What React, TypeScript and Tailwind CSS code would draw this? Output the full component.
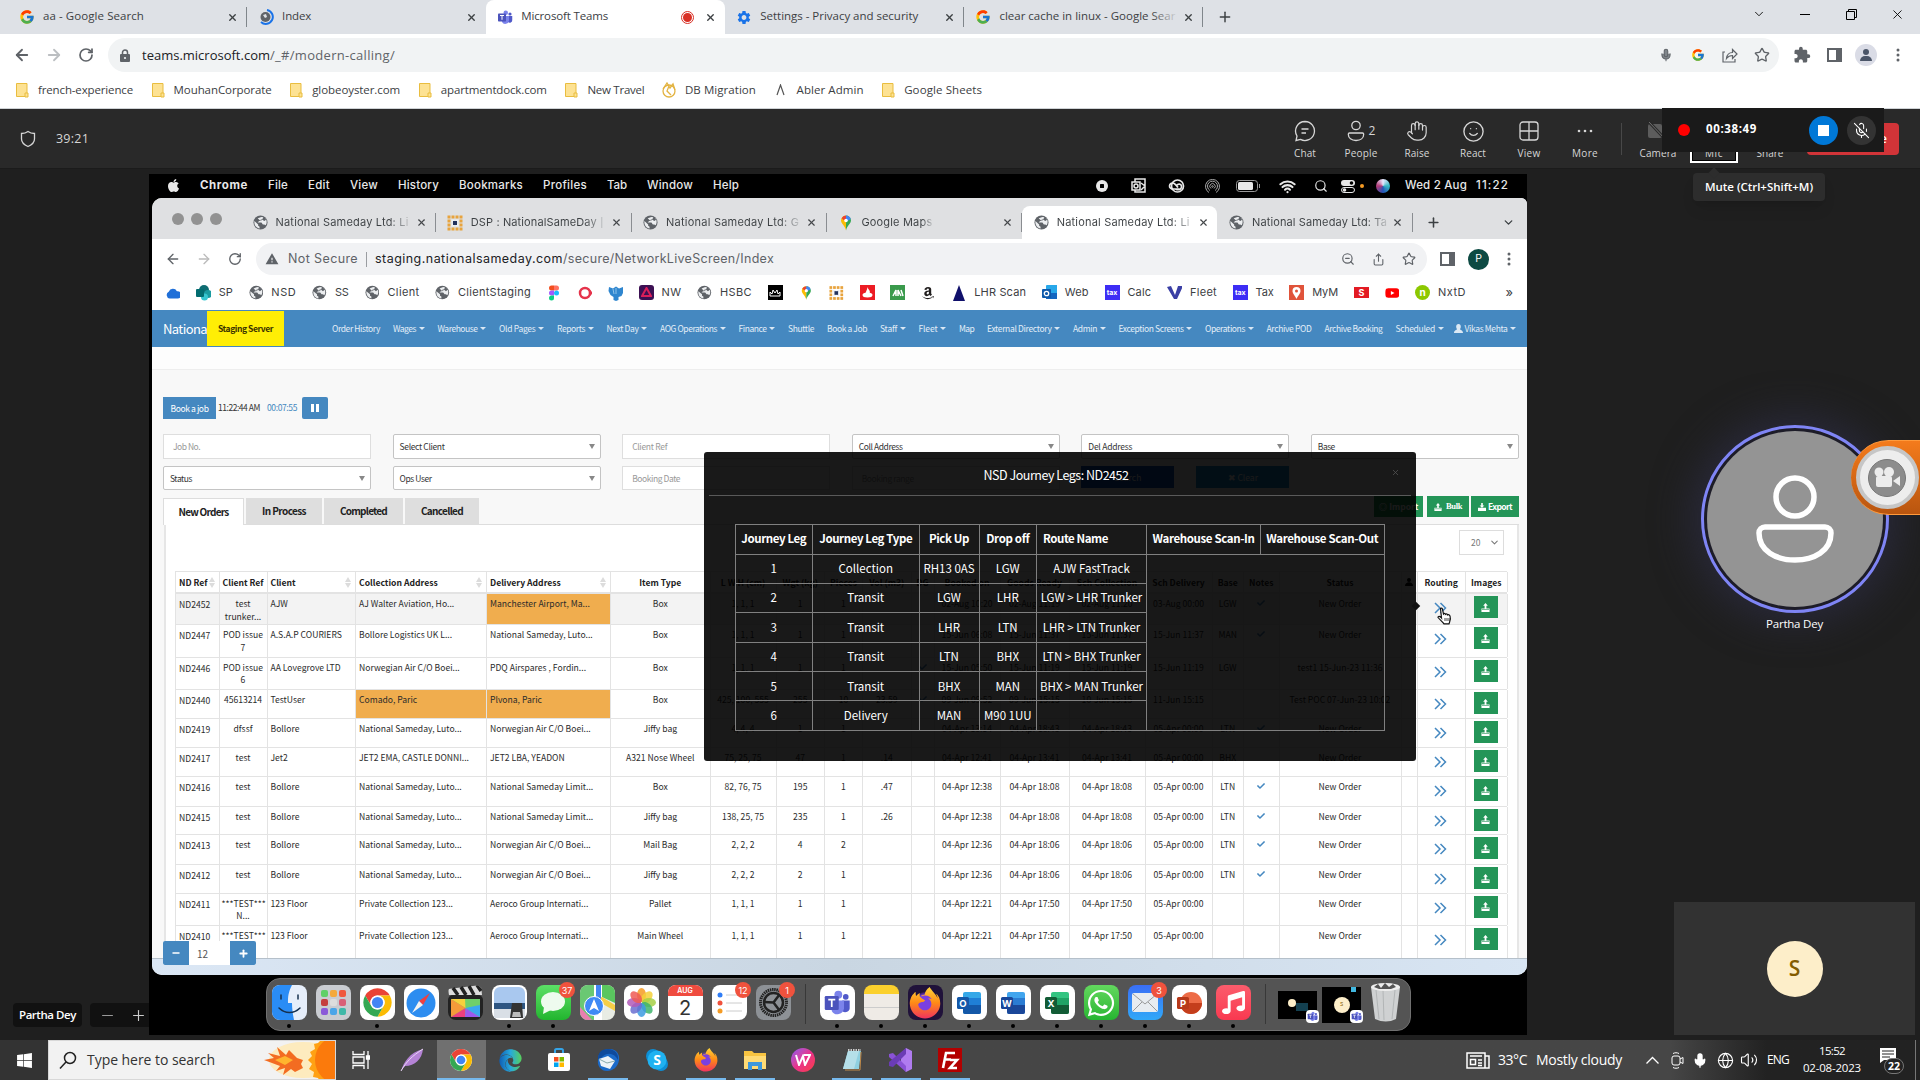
import React, { useLayoutEffect, useRef, useState } from 'react';
import {
  ArrowLeft, ArrowRight, RotateCw, Lock, Mic, MicOff, Star, X, Plus, Minus, ChevronDown,
  Search, ZoomOut, Wifi, Smile, Hand, Volume2, Globe, Share,
} from 'lucide-react';
import { FcGoogle } from 'react-icons/fc';
import { FaApple, FaEdge, FaFirefoxBrowser, FaWhatsapp, FaYoutube, FaAmazon, FaMusic, FaCheck, FaWindows } from 'react-icons/fa';
import { MdExtension, MdSettings, MdWarning } from 'react-icons/md';

type Kids = { children?: React.ReactNode };

/* Text run tracked so that it fills exactly w pixels. */
function T({ w, c = '', children }: { w: number; c?: string; children: string }) {
  const ref = useRef<HTMLSpanElement>(null);
  const [ls, setLs] = useState(0);
  useLayoutEffect(() => {
    if (ref.current) setLs((w - ref.current.getBoundingClientRect().width) / children.length);
  }, [w, children]);
  return (
    <span className={'inline-block shrink-0 whitespace-nowrap leading-none ' + c} style={{ width: w }}>
      <span ref={ref} className="inline-block" style={{ letterSpacing: ls }}>{children}</span>
    </span>
  );
}

const Box = ({ c = '', children }: Kids & { c?: string }) => (
  <span className={'flex shrink-0 items-center justify-center ' + c}>{children}</span>
);

/* ---------- logos ---------- */
const Chrome = ({ s }: { s: number }) => (
  <svg width={s} height={s} viewBox="0 0 48 48">
    <circle cx="24" cy="24" r="22" fill="#fff" />
    {['#ea4335', '#fbbc04', '#34a853'].map((f, i) => (
      <path key={f} fill={f} transform={`rotate(${i * 120} 24 24)`} d="M24 13H43.05A22 22 0 0 0 4.95 13L14.47 29.5A11 11 0 0 1 24 13Z" />
    ))}
    <circle cx="24" cy="24" r="11" fill="#fff" /><circle cx="24" cy="24" r="8.7" fill="#4285f4" />
  </svg>
);
const Teams = ({ s }: { s: number }) => (
  <svg width={s} height={s} viewBox="0 0 32 32">
    <circle cx="26" cy="9" r="3.2" fill="#5059c9" /><circle cx="17.5" cy="6.5" r="4.5" fill="#7b83eb" />
    <path d="M22 13h8.5v8a5 5 0 0 1-8.5 4z" fill="#5059c9" /><path d="M10 13h14v9a7.5 7.5 0 0 1-14 3z" fill="#7b83eb" />
    <rect x="2" y="8" width="16" height="16" rx="1.5" fill="#4b53bc" />
    <path d="M6 12h8M10 12v8.5" stroke="#fff" strokeWidth="2" />
  </svg>
);
const Folder = () => (
  <svg width="16" height="16" viewBox="0 0 16 16">
    <path d="M2.5 1.5h10.5v13H2.5z" fill="#fde293" stroke="#e9bd3f" /><path d="M11 11h3v4h-3z" fill="#fde293" stroke="#e9bd3f" />
  </svg>
);
const GlobeIcon = () => (
  <svg width="15" height="15" viewBox="0 0 16 16">
    <circle cx="8" cy="8" r="7.500" fill="#5f6368" />
    <path d="M1.500 6.500l4 3.500v1.500l1.500 1v2C4 14 1 11.500 1.500 6.500zM5 3.500L9 2l2 .5-1 2-2 .5v1.500H6.500L5 8h4l1.500 2H12l1.500 1c2-3 1-6.500-1-8L14 5l-2 1.500-2-1.500-2 1.500" fill="#eceef0" />
  </svg>
);
const MapPin = () => (
  <svg width="16" height="16" viewBox="0 0 16 16">
    <path d="M8 .5a5 5 0 0 0-5 5c0 3 4 5 5 10z" fill="#fbbc04" /><path d="M8 .5a5 5 0 0 1 5 5c0 3-4 5-5 10z" fill="#34a853" />
    <path d="M8 .5a5 5 0 0 0-4.4 2.7L8 7z" fill="#ea4335" /><path d="M8 .5a5 5 0 0 1 4.7 3.5L8 7z" fill="#4285f4" />
    <circle cx="8" cy="5.5" r="1.8" fill="#fff" />
  </svg>
);
const Dots = () => (
  <svg width="16" height="16" viewBox="0 0 16 16">
    {[0, 1, 2, 3].flatMap((r) => [0, 1, 2, 3].map((k) => (
      <rect key={`${r}${k}`} x={0.5 + k * 4} y={0.5 + r * 4} width="3" height="3" fill={(r === 1 || r === 2) && (k === 1 || k === 2) ? '#eef0f4' : '#e8a33d'} />
    )))}
    <rect x="6" y="6" width="4" height="4" fill="#22315c" />
  </svg>
);
const Kebab = () => (
  <svg width="4" height="14" viewBox="0 0 4 14" fill="#5f6368"><circle cx="2" cy="2" r="1.5" /><circle cx="2" cy="7" r="1.5" /><circle cx="2" cy="12" r="1.5" /></svg>
);
const SidePanel = () => (
  <svg width="15" height="14" viewBox="0 0 15 14"><rect x="1" y="1" width="13" height="12" fill="none" stroke="#5f6368" strokeWidth="2" /><rect x="9" y="1" width="5" height="12" fill="#5f6368" /></svg>
);
const Upload = ({ s = 9 }: { s?: number }) => (
  <svg width={s} height={s} viewBox="0 0 10 10" fill="#fff"><path d="M5 0l2.6 3H6v3h3.5v4H.5V6H4V3H2.4z" /><path d="M1 7.2h8" stroke="#249558" strokeWidth=".7" /></svg>
);
const Office = ({ ch, d, l, m }: { ch: string; d: string; l: string; m: string }) => (
  <svg width="28" height="28" viewBox="0 0 28 28">
    <rect x="8" y="3" width="18" height="22" rx="2" fill={l} /><rect x="8" y="9" width="18" height="8" fill={m} /><path d="M8 16h18v7a2 2 0 0 1-2 2H10a2 2 0 0 1-2-2z" fill={d} />
    <rect x="2" y="8" width="12" height="12" rx="1.5" fill={d} />
    <text x="8" y="17.6" fontSize="9.5" fontWeight="700" fill="#fff" textAnchor="middle" fontFamily="Inter, sans-serif">{ch}</text>
  </svg>
);

/* ---------- outer browser ---------- */
function Tab({ icon, label, w, active, line, rec, fade }: { icon: React.ReactNode; label: string; w: number; active?: boolean; line?: boolean; rec?: boolean; fade?: boolean }) {
  return (
    <div className={'flex h-full w-[239.1px] shrink-0 items-center pl-[11px] pr-[7px] ' + (active ? 'rounded-t-lg bg-white ' : '')}>
      <Box c="mr-2 size-4">{icon}</Box>
      <span className="relative flex pb-[2px]">
        <T w={w} c="text-[11.5px] text-[#3c4043]">{label}</T>
        {fade && <span className="absolute -right-1 top-0 h-full w-7 bg-linear-to-r from-transparent to-[#dee1e6]" />}
      </span>
      {rec && <span className="ml-auto flex size-[13px] items-center justify-center rounded-full border border-[#d93025]"><i className="size-[9px] rounded-full bg-[#d93025]" /></span>}
      <Box c={'size-4 ' + (rec ? 'ml-[8px]' : 'ml-auto')}><X size={11} strokeWidth={3} color="#3c4043" /></Box>
      {line && <i className="-mr-[7px] ml-[6px] h-5 w-px bg-[#80868b]" />}
    </div>
  );
}

const Book = ({ icon, label, w }: { icon: React.ReactNode; label: string; w: number }) => (
  <span className="flex items-center gap-2"><Box c="size-4">{icon}</Box><T w={w} c="text-[11.5px] text-[#3c4043]">{label}</T></span>
);

function OuterChrome() {
  return (
    <div className="h-[109px] shrink-0 border-b border-[#cfd3d6] bg-white">
      <div className="flex h-[34px] bg-[#dee1e6] pl-2">
        <Tab icon={<FcGoogle size={16} />} label="aa - Google Search" w={101} line />
        <Tab icon={<svg width="16" height="16" viewBox="0 0 16 16"><circle cx="7.500" cy="8" r="5" fill="#5f6368" /><path d="M5 6l3-1 1 3-2 1z" fill="#dee1e6" /><path d="M9 1a7 7 0 1 1-6 12" fill="none" stroke="#1a73e8" strokeWidth="2" /></svg>} label="Index" w={29} />
        <Tab icon={<Teams s={17} />} label="Microsoft Teams" w={87} active rec />
        <Tab icon={<MdSettings size={17} color="#1a73e8" />} label="Settings - Privacy and security" w={158} line />
        <Tab icon={<FcGoogle size={16} />} label="clear cache in linux - Google Sear" w={176} line fade />
        <Box c="ml-[10px] w-6"><Plus size={16} strokeWidth={2.2} color="#3c4043" /></Box>
        <div className="ml-auto flex h-[28px] items-center text-black">
          <Box c="w-[46px]"><ChevronDown size={14} strokeWidth={1.5} /></Box>
          <Box c="w-[46px]"><i className="h-px w-[10px] bg-black" /></Box>
          <Box c="w-[46px]"><svg width="11" height="11" fill="none" stroke="#000"><path d="M.5 2.5h8v8h-8zM2.500 2.500v-2h8v8h-2" /></svg></Box>
          <Box c="w-[46px]"><X size={15} strokeWidth={1.4} /></Box>
        </div>
      </div>
      <div className="flex h-[42px] items-center pl-[6px] text-[#5f6368]">
        <Box c="w-8"><ArrowLeft size={18} strokeWidth={2.4} /></Box>
        <Box c="w-8"><ArrowRight size={18} strokeWidth={2.4} color="#bcbfc2" /></Box>
        <Box c="w-8"><RotateCw size={16} strokeWidth={2.6} /></Box>
        <div className="ml-[6px] flex h-[34px] w-[1671px] items-center rounded-full bg-[#f1f3f4] pl-[10px] pr-px">
          <Box c="mr-[10px] w-[14px]"><svg width="10" height="13" viewBox="0 0 10 13"><rect y="5" width="10" height="8" rx="1" fill="#5f6368" /><path d="M2.500 6V3.500a2.500 2.500 0 0 1 5 0V6" fill="none" stroke="#5f6368" strokeWidth="1.500" /><circle cx="5" cy="9" r="1.100" fill="#f1f3f4" /></svg></Box>
          <T w={128} c="text-[13px] text-[#202124]">teams.microsoft.com</T>
          <T w={125} c="text-[13px] text-[#5f6368]">/_#/modern-calling/</T>
          <span className="ml-auto" />
          <Box c="w-8"><Mic size={14} strokeWidth={1.8} fill="#80868b" /></Box>
          <Box c="w-8"><FcGoogle size={14} /></Box>
          <Box c="w-8"><svg width="16" height="16" viewBox="0 0 16 16" fill="none" stroke="#5f6368" strokeWidth="1.200"><path d="M3 5H1v10h12v-3M4.500 11.500c.5-4 2.500-6 6-6V2.500L15 7l-4.500 4.500V8.500c-3 0-4.500 1-6 3z" /></svg></Box>
          <Box c="w-8"><Star size={16} strokeWidth={2} /></Box>
        </div>
        <Box c="ml-[7px] w-8"><MdExtension size={18} /></Box>
        <Box c="w-8"><SidePanel /></Box>
        <Box c="w-8"><span className="flex size-[22px] flex-col items-center justify-center gap-px rounded-full bg-[#dadce6]"><i className="size-[6px] rounded-full bg-[#4a5568]" /><i className="h-[5px] w-[12px] rounded-t-full bg-[#4a5568]" /></span></Box>
        <Box c="w-8"><Kebab /></Box>
      </div>
      <div className="flex h-[28px] items-center gap-[16.600px] pl-[14px]">
        <Book icon={<Folder />} label="french-experience" w={95} />
        <Book icon={<Folder />} label="MouhanCorporate" w={98} />
        <Book icon={<Folder />} label="globeoyster.com" w={88} />
        <Book icon={<Folder />} label="apartmentdock.com" w={106} />
        <Book icon={<Folder />} label="New Travel" w={57} />
        <Book icon={<svg width="16" height="16" viewBox="0 0 16 16" fill="none" stroke="#e3b341" strokeWidth="1.300"><circle cx="8" cy="9" r="6" /><path d="M2 7L6 1l3 5 3-4 2 6M8 4l-2 5 4 4" /></svg>} label="DB Migration" w={71} />
        <Book icon={<svg width="9" height="12" viewBox="0 0 9 12" fill="none" stroke="#555" strokeWidth="1.200"><path d="M1 11L4.500 1 8 11" /></svg>} label="Abler Admin" w={67} />
        <Book icon={<Folder />} label="Google Sheets" w={78} />
      </div>
    </div>
  );
}

/* ---------- meeting bar ---------- */
const MeetBtn = ({ icon, label, w }: { icon: React.ReactNode; label: string; w: number }) => (
  <div className="flex w-14 shrink-0 flex-col items-center">
    <Box c="mt-[10px] h-6">{icon}</Box>
    <T w={w} c="mt-[5px] text-[10px]">{label}</T>
  </div>
);

function MeetingBar() {
  return (
    <div className="relative flex h-[60px] shrink-0 border-b border-[#1b1b1b] bg-[#292929] text-[#d6d6d6]">
      <div className="flex w-[1277px] items-center pl-5 pt-px">
        <svg width="16" height="18" viewBox="0 0 16 18" fill="none" stroke="#d6d6d6" strokeWidth="1.300"><path d="M8 1.500c2 1.500 4 2 6.500 2V9c0 4-3 6-6.500 7.500C4.500 15 1.500 13 1.500 9V3.500C4 3.500 6 3 8 1.500z" /></svg>
        <T w={33} c="ml-5 text-[12.5px]">39:21</T>
      </div>
      <MeetBtn label="Chat" w={22} icon={<svg width="22" height="22" viewBox="0 0 22 22" fill="none" stroke="#d6d6d6" strokeWidth="1.300"><path d="M11 1.500a9.500 9.500 0 1 1-4.500 17.900L2 20.500l1-4.500A9.500 9.500 0 0 1 11 1.500zM7.500 9h7M7.500 13h4.500" /></svg>} />
      <MeetBtn label="People" w={33} icon={<span className="flex items-center gap-1 text-[12px]"><svg width="18" height="22" viewBox="0 0 18 22" fill="none" stroke="#d6d6d6" strokeWidth="1.300"><circle cx="9" cy="5.500" r="4.200" /><path d="M2.500 13h13a1.200 1.200 0 0 1 1.200 1.200c0 4-3.200 6.300-7.700 6.300s-7.700-2.300-7.700-6.300A1.200 1.200 0 0 1 2.500 13z" /></svg>2</span>} />
      <MeetBtn label="Raise" w={25} icon={<Hand size={22} strokeWidth={1.3} />} />
      <MeetBtn label="React" w={26} icon={<Smile size={23} strokeWidth={1.4} />} />
      <MeetBtn label="View" w={23} icon={<svg width="20" height="20" fill="none" stroke="#d6d6d6" strokeWidth="1.300"><rect x="1" y="1" width="18" height="18" rx="3" /><path d="M10 1v18M1 10h18" /></svg>} />
      <MeetBtn label="More" w={26} icon={<svg width="16" height="4" fill="#d6d6d6"><circle cx="2" cy="2" r="1.300" /><circle cx="8" cy="2" r="1.300" /><circle cx="14" cy="2" r="1.300" /></svg>} />
      <i className="mr-2 ml-2 mt-[14px] h-8 w-px bg-[#484848]" />
      <MeetBtn label="Camera" w={37} icon={<svg width="22" height="20" viewBox="0 0 22 20"><rect x="1" y="3" width="14" height="14" rx="2" fill="#5c5c5c" /><path d="M2 1l17 18" stroke="#292929" strokeWidth="3" /><path d="M2 1l17 18" stroke="#707070" /></svg>} />
      <div className="flex w-14 justify-center">
        <div className="mt-2 h-[46px] w-[48px] border-2 border-white bg-black p-px">
          <div className="flex h-full items-end justify-center bg-[#292929] pb-[2px]"><T w={18} c="text-[10px]">Mic</T></div>
        </div>
      </div>
      <MeetBtn label="Share" w={27} icon={null} />
      <div className="ml-[9px] mt-[14px] flex h-8 w-[92px] items-center justify-end rounded bg-[#d13438] pr-3 text-[13px] font-semibold text-white">Leave</div>

      <div className="absolute left-[1662px] top-[-1px] z-20 flex h-[44px] w-[222px] items-center bg-[#1a1a1a]">
        <i className="ml-4 size-3 rounded-full bg-[#ff0000]" />
        <T w={51} c="ml-4 pb-[2px] text-[11.5px] font-bold text-white">00:38:49</T>
        <span className="ml-[52px] flex size-[29px] items-center justify-center rounded-full bg-[#0078d7]"><i className="size-[11px] bg-white" /></span>
        <span className="ml-[9px] flex size-[29px] items-center justify-center rounded-full bg-[#333] text-white"><MicOff size={17} strokeWidth={1.5} /></span>
      </div>
      <div className="absolute left-[1693px] top-[64px] z-20 flex h-7 w-[132px] items-center justify-center rounded bg-[#2d2d2d] text-white shadow-lg">
        <i className="absolute -top-1 left-[17px] size-2 rotate-45 bg-[#2d2d2d]" />
        <T w={108} c="text-[11.5px] font-semibold">Mute (Ctrl+Shift+M)</T>
      </div>
    </div>
  );
}

/* ---------- shared mac desktop ---------- */
const menus: [string, number][] = [['File', 20], ['Edit', 22], ['View', 28], ['History', 41], ['Bookmarks', 64], ['Profiles', 44], ['Tab', 20], ['Window', 46], ['Help', 26]];

function MacMenu() {
  return (
    <div className="flex h-6 shrink-0 items-center pl-[17px] pr-[18px] font-[Inter,sans-serif] text-[11.5px] text-[#e8e8e8]">
      <FaApple size={15} className="-mt-[2px]" />
      <span className="ml-[19px] flex gap-5">
        <T w={48} c="font-bold">Chrome</T>
        {menus.map(([m, w]) => <T key={m} w={w} c="font-medium">{m}</T>)}
      </span>
      <span className="ml-auto flex items-center">
        <Box c="w-8"><svg width="14" height="14"><circle cx="7" cy="7" r="6" fill="#e8e8e8" /><rect x="5" y="5" width="4" height="4" rx=".5" fill="#000" /></svg></Box>
        <Box c="w-[42px]"><svg width="16" height="16" viewBox="0 0 16 16" fill="none" stroke="#e8e8e8" strokeWidth="1.500"><path d="M4 4V1h10v13H4v-2M10 5l4 3M14 8l-4 4" /><rect x="1" y="4" width="8" height="8" fill="#000" /><circle cx="5" cy="8" r="2" /></svg></Box>
        <Box c="w-[32px]"><svg width="18" height="15" viewBox="0 0 18 15" fill="none" stroke="#e8e8e8" strokeWidth="1.700"><circle cx="10.500" cy="7" r="6" /><path d="M12.500 10H6a3 3 0 1 1 .5-5.800c1.500.3 2.500 2 4.500 4.300M8.500 10c4 2 6.500-.500 6-3s-3.500-2.500-5-.500" /></svg></Box>
        <Box c="w-[40px]"><svg width="15" height="15" viewBox="0 0 15 15" fill="none" stroke="#a8a8a8"><path d="M4 13.500a7 7 0 1 1 7 0M5 11.500a5 5 0 1 1 5 0M6 9.500a2.700 2.700 0 1 1 3 0" /><circle cx="7.500" cy="7.500" r=".8" /></svg></Box>
        <Box c="w-[32px]"><svg width="25" height="12"><rect x=".5" y=".5" width="21" height="11" rx="3" fill="none" stroke="#999" /><rect x="2" y="2" width="15" height="8" rx="1.500" fill="#e8e8e8" /><path d="M23.500 4v4" stroke="#999" /></svg></Box>
        <Box c="w-[46px]"><Wifi size={17} strokeWidth={3} /></Box>
        <Box c="w-[22px]"><Search size={14} /></Box>
        <Box c="w-[32px]"><svg width="14" height="13"><rect width="14" height="6" rx="3" fill="#e8e8e8" /><circle cx="10.500" cy="3" r="1.800" fill="#000" /><rect x=".5" y="7.500" width="13" height="5" rx="2.500" fill="none" stroke="#e8e8e8" /><circle cx="3.500" cy="10" r="1.800" fill="#e8e8e8" /></svg></Box>
        <i className="-ml-1 size-1 rounded-full bg-[#f59a23]" />
        <span className="ml-[12px] size-[14px] rounded-full bg-[conic-gradient(#e9e9ff,#35b8c4,#2455b8,#b43a77,#e9e9ff)]" />
        <T w={62} c="ml-[15px] font-medium">Wed 2 Aug</T>
        <T w={33} c="ml-[9px] font-medium">11:22</T>
      </span>
    </div>
  );
}

const MacTab = ({ icon, label, w, c }: { icon: React.ReactNode; label: string; w: number; c: string }) => (
  <div className={'flex h-[33px] w-[195.300px] shrink-0 items-center ' + c}>
    <Box c="ml-[11px] mr-[7.500px] w-4">{icon}</Box>
    <T w={w} c="text-[11px] bg-linear-to-r from-[#3c4043] from-85% to-[#c0c2c4] bg-clip-text text-transparent">{label}</T>
    <Box c="ml-auto mr-[8px] w-3"><X size={11} strokeWidth={2.5} color="#45484b" /></Box>
    {!c.includes('bg-white') && <i className="h-[19px] w-px bg-[#8a8d91]" />}
  </div>
);

const Fav = ({ c, children }: Kids & { c: string }) => <Box c={'size-[15px] text-[7px] font-bold leading-none text-white ' + c}>{children}</Box>;
const macMarks: [React.ReactNode, string?, number?][] = [
  [<svg width="16" height="12" viewBox="0 0 16 12"><path d="M4 12a4 4 0 0 1-1-7.500A5 5 0 0 1 12 4a4 4 0 0 1 1 8z" fill="#1f6fd8" /></svg>],
  [<svg width="16" height="16"><circle cx="8" cy="5" r="5" fill="#0f6c72" /><circle cx="12" cy="9" r="4" fill="#1a9ba1" /><circle cx="8.500" cy="12" r="3.500" fill="#37c6d0" /><rect y="4" width="8" height="8" rx="1" fill="#036c70" /></svg>, 'SP', 14],
  [<GlobeIcon />, 'NSD', 25], [<GlobeIcon />, 'SS', 14], [<GlobeIcon />, 'Client', 32], [<GlobeIcon />, 'ClientStaging', 73],
  [<svg width="12" height="16" viewBox="0 0 12 16"><path d="M6 .5H3.500a2.500 2.500 0 0 0 0 5H6z" fill="#f24e1e" /><path d="M6 .5h2.500a2.500 2.500 0 0 1 0 5H6z" fill="#ff7262" /><path d="M6 5.500H3.500a2.500 2.500 0 0 0 0 5H6z" fill="#a259ff" /><circle cx="8.500" cy="8" r="2.500" fill="#1abcfe" /><path d="M6 10.500H3.500A2.500 2.500 0 1 0 6 13z" fill="#0acf83" /></svg>],
  [<svg width="16" height="14"><circle cx="7" cy="7" r="5" fill="none" stroke="#e5334b" strokeWidth="2.500" /><path d="M12 4l3 3-3 3z" fill="#e5334b" /></svg>],
  [<svg width="16" height="16"><path d="M1 2l4 1.500 3-2 3 2L15 2l.5 5-2 4-3 1v3l-2.500 1-2.500-1v-3l-3-2L.5 6z" fill="#2f86cf" /><path d="M8 3v6M5 4l1 5" stroke="#8ec3ea" /></svg>],
  [<Fav c="rounded-[3px] bg-[#3c1053]"><svg width="11" height="11"><path d="M5.500 1l4.500 8H1z" fill="none" stroke="#da1e5a" strokeWidth="2" /></svg></Fav>, 'NW', 20],
  [<GlobeIcon />, 'HSBC', 32],
  [<Fav c="bg-black"><svg width="12" height="10"><path d="M1 8V4l2 2 1-4 2 3 2-3 1 4 2-2v4z" fill="none" stroke="#fff" /></svg></Fav>],
  [<MapPin />], [<Dots />],
  [<Fav c="bg-[#ec1c24]"><svg width="13" height="13" fill="#fff"><ellipse cx="6.500" cy="9" rx="5" ry="2.500" /><path d="M6.500 1c0 2 2.500 3 2.500 5.500L4.500 9C4 6 6.500 4 6.500 1z" /></svg></Fav>],
  [<Fav c="bg-[#3a9a4c]"><svg width="12" height="9"><path d="M1 8l3-6v6M6 8V2l3 6M9 2l2 6" fill="none" stroke="#fff" strokeWidth="1.500" /></svg></Fav>],
  [<FaAmazon size={14} color="#221f1f" />],
  [<svg width="12" height="16"><path d="M6 0l6 16H0z" fill="#10106b" /></svg>, 'LHR Scan', 52],
  [<svg width="16" height="16"><rect x="4" width="12" height="14" rx="1" fill="#28a8ea" /><path d="M4 8h12v6H4z" fill="#1466c0" /><rect y="4" width="9" height="9" rx="1" fill="#0f5aab" /><circle cx="4.500" cy="8.500" r="2.200" fill="none" stroke="#fff" strokeWidth="1.300" /></svg>, 'Web', 24],
  [<Fav c="bg-[#3d2df5]">tax</Fav>, 'Calc', 24],
  [<svg width="16" height="14"><path d="M0 1l4-1 4 9 3-9h5l-6 13H7z" fill="#3a3fa5" /></svg>, 'Fleet', 27],
  [<Fav c="bg-[#3d2df5]">tax</Fav>, 'Tax', 18],
  [<Fav c="bg-[#e0533a]"><svg width="9" height="12"><path d="M4.500 0a4 4 0 0 1 4 4c0 3-3 5-4 8-1-3-4-5-4-8a4 4 0 0 1 4-4z" fill="#fff" /><circle cx="4.500" cy="4" r="1.500" fill="#e0533a" /></svg></Fav>, 'MyM', 26],
  [<span className="flex h-[11px] w-[15px] items-center justify-center bg-[#e31b23] text-[9px] font-bold leading-none text-white">S</span>],
  [<FaYoutube size={16} color="#ff0000" />],
  [<span className="flex size-[15px] items-center justify-center rounded-full bg-[#8cc800] pb-0.5 text-[10px] font-bold leading-none text-white">n</span>, 'NxtD', 28],
];

const nav: [string, number, boolean][] = [
  ['Order History', 48, false], ['Wages', 23, true], ['Warehouse', 40, true], ['Old Pages', 36.5, true], ['Reports', 28, true], ['Next Day', 32, true],
  ['AOG Operations', 57, true], ['Finance', 28, true], ['Shuttle', 26, false], ['Book a Job', 40, false], ['Staff', 17, true], ['Fleet', 19, true],
  ['Map', 15, false], ['External Directory', 64.5, true], ['Admin', 24, true], ['Exception Screens', 65, true], ['Operations', 40, true],
  ['Archive POD', 45, false], ['Archive Booking', 58, false], ['Scheduled', 39.5, true],
];
const Caret = () => <svg width="6" height="3"><path d="M0 0h6L3 3z" fill="#d9e7f4" /></svg>;

const Field = ({ label, select, w }: { label: string; select?: boolean; w: number }) => (
  <div className={'flex h-full items-center border bg-white text-[8.500px] ' + (select ? 'rounded-[2px] border-[#c4c4c4] pl-[6px] pr-[5px] text-[#333]' : 'border-[#dedede] pl-[9px] text-[#999]')}>
    <T w={w}>{label}</T>
    {select && <svg className="ml-auto" width="6" height="5"><path d="M0 0h6L3 5z" fill="#888" /></svg>}
  </div>
);

const cols = 'grid shrink-0 grid-cols-[43.500px_48px_88.500px_131px_124px_99.500px_66px_48.500px_38px_48.500px_23px_66px_69px_76px_67px_31.500px_35.500px_122px_16.500px_47.500px_42.500px]';
const heads = ['ND Ref', 'Client Ref', 'Client', 'Collection Address', 'Delivery Address', 'Item Type', 'L W H (cm)', 'Wgt (kg)', 'Pieces', 'Vol (m3)', 'DG', 'Booked on', 'Goods Ready', 'Sch Collection', 'Sch Delivery', 'Base', 'Notes', 'Status', '', 'Routing', 'Images'];
const rows: { h: string; v: string[]; o?: number[] }[] = [
  { h: 'h-[32px] bg-[#f3f3f3]', v: ['ND2452', 'test trunker...', 'AJW', 'AJ Walter Aviation, Ho...', 'Manchester Airport, Ma...', 'Box', '1, 1, 1', '1', '1', '', '', '02-Aug 10:20', '02-Aug 11:19', '02-Aug 11:20', '03-Aug 00:00', 'LGW', '✓', 'New Order'], o: [4] },
  { h: 'h-[32.500px]', v: ['ND2447', 'POD issue 7', 'A.S.A.P COURIERS', 'Bollore Logistics UK L...', 'National Sameday, Luto...', 'Box', '1, 1, 1', '1', '1', '', '', '15-Jun 06:08', '15-Jun 11:37', '15-Jun 11:37', '15-Jun 11:37', 'MAN', '✓', 'New Order'] },
  { h: 'h-[32.500px]', v: ['ND2446', 'POD issue 6', 'AA Lovegrove LTD', 'Norwegian Air C/O Boei...', 'PDQ Airspares , Fordin...', 'Box', '1, 1, 1', '1', '1', '', '✓', '15-Jun 05:50', '15-Jun 11:19', '15-Jun 11:19', '15-Jun 11:19', 'LGW', '', 'test1 15-Jun-23 11:36'] },
  { h: 'h-[28.500px]', v: ['ND2440', '45613214', 'TestUser', 'Comado, Paric', 'Plvona, Paric', 'Box', '425, 100, 555', '255', '10', '23.59', '✓', '09-Jun 09:52', '09-Jun 15:15', '10-Jun 15:15', '11-Jun 15:15', '', '', 'Test POC 07-Jun-23 10:02'], o: [3, 4] },
  { h: 'h-[29.500px]', v: ['ND2419', 'dfssf', 'Bollore', 'National Sameday, Luto...', 'Norwegian Air C/O Boei...', 'Jiffy bag', '4, 4, 4', '1', '1', '', '', '04-Apr 13:14', '04-Apr 18:43', '04-Apr 18:43', '05-Apr 00:00', 'LTN', '✓', 'New Order'] },
  { h: 'h-[29px]', v: ['ND2417', 'test', 'Jet2', 'JET2 EMA, CASTLE DONNI...', 'JET2 LBA, YEADON', 'A321 Nose Wheel', '75, 25, 75', '47', '1', '.14', '', '04-Apr 12:41', '04-Apr 13:41', '04-Apr 13:41', '05-Apr 00:00', 'BHX', '', 'New Order'] },
  { h: 'h-[29.500px]', v: ['ND2416', 'test', 'Bollore', 'National Sameday, Luto...', 'National Sameday Limit...', 'Box', '82, 76, 75', '195', '1', '.47', '', '04-Apr 12:38', '04-Apr 18:08', '04-Apr 18:08', '05-Apr 00:00', 'LTN', '✓', 'New Order'] },
  { h: 'h-[28.500px]', v: ['ND2415', 'test', 'Bollore', 'National Sameday, Luto...', 'National Sameday Limit...', 'Jiffy bag', '138, 25, 75', '235', '1', '.26', '', '04-Apr 12:38', '04-Apr 18:08', '04-Apr 18:08', '05-Apr 00:00', 'LTN', '✓', 'New Order'] },
  { h: 'h-[30px]', v: ['ND2413', 'test', 'Bollore', 'National Sameday, Luto...', 'Norwegian Air C/O Boei...', 'Mail Bag', '2, 2, 2', '4', '2', '', '', '04-Apr 12:36', '04-Apr 18:06', '04-Apr 18:06', '05-Apr 00:00', 'LTN', '✓', 'New Order'] },
  { h: 'h-[28.500px]', v: ['ND2412', 'test', 'Bollore', 'National Sameday, Luto...', 'Norwegian Air C/O Boei...', 'Jiffy bag', '2, 2, 2', '2', '1', '', '', '04-Apr 12:36', '04-Apr 18:06', '04-Apr 18:06', '05-Apr 00:00', 'LTN', '✓', 'New Order'] },
  { h: 'h-[32.500px]', v: ['ND2411', '***TEST*** N...', '123 Floor', 'Private Collection 123...', 'Aeroco Group Internati...', 'Pallet', '1, 1, 1', '1', '1', '', '', '04-Apr 12:21', '04-Apr 17:50', '04-Apr 17:50', '05-Apr 00:00', '', '', 'New Order'] },
  { h: 'h-[33px]', v: ['ND2410', '***TEST***', '123 Floor', 'Private Collection 123...', 'Aeroco Group Internati...', 'Main Wheel', '1, 1, 1', '1', '1', '', '', '04-Apr 12:21', '04-Apr 17:50', '04-Apr 17:50', '05-Apr 00:00', '', '', 'New Order'] },
];

function Orders() {
  return (
    <div className="ml-[11px] mt-[16px] w-[1332px] border-t border-[#e3e3e3] text-[8.600px] text-[#2b2b2b]">
      <div className={cols + ' h-[20px] border-l border-[#e3e3e3] font-bold text-[#222]'}>
        {heads.map((h, i) => (
          <div key={i} className={'flex items-center whitespace-nowrap border-r border-[#e3e3e3] leading-none ' + ([0, 2, 3, 4].includes(i) ? 'pl-[3px]' : 'justify-center')}>
            {h}
            {i === 18 && <svg width="8" height="8"><circle cx="4" cy="2" r="2" /><path d="M0 8c0-5 8-5 8 0z" /></svg>}
            {[0, 2, 3, 4].includes(i) && <svg className="ml-auto mr-1" width="6" height="11" fill="#dcdcdc"><path d="M0 5h6L3 0zM0 6h6l-3 5z" /></svg>}
          </div>
        ))}
      </div>
      {rows.map((r, n) => (
        <div key={n} className={`${cols} ${r.h} ${n ? 'border-t' : 'border-t-2'} border-l border-[#e3e3e3] leading-[12.500px]`}>
          {r.v.map((v, i) => (
            <div key={i} className={'overflow-hidden border-r border-[#e3e3e3] ' + (i === 1 ? 'px-[2px] pt-[3px] text-center ' : i > 4 ? 'whitespace-nowrap pt-[3px] text-center ' : i === 0 ? 'whitespace-nowrap pl-[3px] pt-[4px] ' : 'whitespace-nowrap pl-[3px] pt-[3px] ') + (r.o?.includes(i) ? 'bg-[#f0ad4e]' : '')}>
              {v === '✓' ? <FaCheck size={8} color="#4588c0" className="mx-auto mt-[2px]" /> : v}
            </div>
          ))}
          <div className="border-r border-[#e3e3e3]" />
          <div className="flex justify-center border-r border-[#e3e3e3] pr-px pt-[8px]">
            <svg width="13" height="12" fill="none" stroke="#4588c0" strokeWidth="1.500"><path d="M1 1l5 5-5 5M6.500 1l5 5-5 5" /></svg>
          </div>
          <div className="flex justify-center border-r border-[#e3e3e3] pr-px pt-[2px]"><Box c="h-[22px] w-[24px] bg-[#249558]"><Upload /></Box></div>
        </div>
      ))}
    </div>
  );
}

const legs = [['1', 'Collection', 'RH13 0AS', 'LGW', 'AJW FastTrack'], ['2', 'Transit', 'LGW', 'LHR', 'LGW > LHR Trunker'], ['3', 'Transit', 'LHR', 'LTN', 'LHR > LTN Trunker'], ['4', 'Transit', 'LTN', 'BHX', 'LTN > BHX Trunker'], ['5', 'Transit', 'BHX', 'MAN', 'BHX > MAN Trunker'], ['6', 'Delivery', 'MAN', 'M90 1UU', '']];
const legHeads: [string, number][] = [['Journey Leg', 65], ['Journey Leg Type', 93], ['Pick Up', 40], ['Drop off', 43], ['Route Name', 65], ['Warehouse Scan-In', 102], ['Warehouse Scan-Out', 112]];

function Journey() {
  return (
    <div className="absolute left-[552px] top-[254px] z-10 h-[309px] w-[712px] rounded-[3px] bg-black/90 font-['Noto_Sans_CJK_SC',sans-serif] text-white">
      <div className="mx-[5px] flex h-[43.500px] items-center justify-center border-b border-[#5a5a5a] pr-[8px] pt-[3px] text-[12.500px]">
        <T w={145}>NSD Journey Legs: ND2452</T>
      </div>
      <X size={9} color="#555" className="absolute right-[16px] top-[16px]" />
      <i className="absolute -right-[3px] top-[151px] size-[6px] rotate-45 bg-[#111]" />
      <table className="ml-[30.500px] mt-[28px] w-[650px] table-fixed border-collapse text-center text-[11.500px] leading-none [&_td]:border [&_td]:border-[#808080] [&_th]:border [&_th]:border-[#808080]">
        <colgroup><col className="w-[77.500px]" /><col className="w-[106.500px]" /><col className="w-[60px]" /><col className="w-[57.500px]" /><col className="w-[110px]" /><col className="w-[114px]" /><col /></colgroup>
        <thead><tr className="h-[30px]">{legHeads.map(([h, w], i) => <th key={h} className={i === 4 ? 'pl-[6px] text-left' : ''}><T w={w}>{h}</T></th>)}</tr></thead>
        <tbody>
          {legs.map((l, i) => (
            <tr key={i} className="h-[29.400px]">{l.map((v, k) => <td key={k} className="whitespace-nowrap">{v}</td>)}{i === 0 && <td rowSpan={6} colSpan={2} />}</tr>
          ))}
        </tbody>
      </table>
    </div>
  );
}

function MacWindow() {
  return (
    <div className="relative ml-[3px] flex h-[777px] w-[1375px] shrink-0 flex-col overflow-hidden rounded-[10px] rounded-tr-md bg-white">
      <div className="flex h-[41px] shrink-0 items-end bg-[#dfe0e2] font-[Inter,sans-serif]">
        <span className="mb-[14px] ml-[20px] mr-[19px] flex gap-[7px]">{[0, 1, 2].map((i) => <i key={i} className="size-3 rounded-full bg-[#929292]" />)}</span>
        <MacTab icon={<GlobeIcon />} label="National Sameday Ltd: Li" w={133} c="" />
        <MacTab icon={<Dots />} label="DSP : NationalSameDay |" w={133} c="" />
        <MacTab icon={<GlobeIcon />} label="National Sameday Ltd: G" w={133} c="" />
        <MacTab icon={<MapPin />} label="Google Maps" w={71} c="" />
        <MacTab icon={<GlobeIcon />} label="National Sameday Ltd: Li" w={133} c="rounded-t-lg bg-white" />
        <MacTab icon={<GlobeIcon />} label="National Sameday Ltd: Ta" w={135} c="" />
        <Box c="ml-[9px] h-[33px] w-6"><Plus size={15} strokeWidth={2.5} color="#3c4043" /></Box>
        <Box c="ml-auto mr-[11px] h-[33px] w-4"><ChevronDown size={13} strokeWidth={2.5} color="#3c4043" /></Box>
      </div>
      <div className="flex h-10 shrink-0 items-center pl-[5px] font-[Inter,sans-serif] text-[#5f6368]">
        <Box c="w-[31px]"><ArrowLeft size={16} /></Box><Box c="w-[31px]"><ArrowRight size={16} color="#bbb" /></Box><Box c="w-[31px]"><RotateCw size={14} strokeWidth={2.3} /></Box>
        <div className="ml-[6px] flex h-8 w-[1171px] items-center rounded-full bg-[#f1f2f4]">
          <Box c="ml-[9px] mr-[9px] w-[14px]"><MdWarning size={14} /></Box>
          <T w={70} c="text-[12.500px]">Not Secure</T>
          <i className="ml-2 mr-2 h-[15px] w-px bg-[#9a9da1]" />
          <T w={188} c="text-[12.500px] text-[#202124]">staging.nationalsameday.com</T>
          <T w={211} c="text-[12.500px]">/secure/NetworkLiveScreen/Index</T>
          <Box c="ml-auto w-[30.500px]"><ZoomOut size={14} /></Box><Box c="w-[30.500px]"><Share size={13} /></Box><Box c="mr-[3px] w-[30.500px]"><Star size={14} /></Box>
        </div>
        <Box c="ml-[5px] w-[31px]"><SidePanel /></Box>
        <Box c="w-[31px]"><span className="flex size-[21px] items-center justify-center rounded-full bg-[#0d4a43] text-[10.500px] leading-none text-white">P</span></Box>
        <Box c="w-[30px]"><Kebab /></Box>
      </div>
      <div className="flex h-[31px] shrink-0 items-center gap-[16px] pb-[4px] pl-[13.500px] pr-[14px] font-[Inter,sans-serif] text-[11px] text-[#3c4043]">
        {macMarks.map(([ic, l, w], i) => (
          <span key={i} className="flex items-center gap-2"><Box c="w-[14.600px]">{ic}</Box>{l && w && <T w={w}>{l}</T>}</span>
        ))}
        <span className="ml-auto text-[13px] leading-none">»</span>
      </div>
      <div className="flex h-[37px] shrink-0 items-center bg-[#4588c0] pl-[11px] font-['Noto_Sans_CJK_SC',sans-serif] text-[8.500px] text-[#e3eef8]">
        <span className="w-[44px] overflow-hidden whitespace-nowrap text-[13px] text-white"><T w={44}>Nationa</T></span>
        <span className="mb-px flex h-[35px] w-[77px] items-center justify-center bg-[#ffee05] font-bold text-[#3a3300]"><T w={55}>Staging Server</T></span>
        <span className="ml-[48px] flex gap-[13px]">
          {nav.map(([l, w, c]) => <span key={l} className="flex items-center gap-[2.500px]"><T w={w}>{l}</T>{c && <Caret />}</span>)}
        </span>
        <span className="ml-[10px] flex items-center gap-[2px]">
          <svg width="9" height="9" fill="#dbe8f4"><ellipse cx="4.500" cy="2.800" rx="2.300" ry="2.800" /><path d="M0 9c0-3 3-3 3-4h3c0 1 3 1 3 4z" /></svg><T w={43}>Vikas Mehta</T><Caret />
        </span>
      </div>
      <div className="h-[23px] shrink-0 border-b border-[#eee] bg-[#fdfdfd]" />
      <div className="flex h-[588px] shrink-0 flex-col overflow-hidden bg-[#f8f8f8] pl-[11px] font-['Noto_Sans_CJK_SC',sans-serif]">
        <div className="mt-[27px] flex h-[22px] shrink-0 items-center text-[8.500px] text-[#333]">
          <Box c="mr-[2px] h-[22px] w-[53px] bg-[#4588c0] text-white"><T w={38}>Book a job</T></Box>
          <T w={42} c="pb-[2px]">11:22:44 AM</T><T w={30} c="ml-[7px] pb-[2px] text-[#4588c0]">00:07:55</T>
          <Box c="ml-[5px] h-[22px] w-[26px] gap-[2px] rounded-[2px] bg-[#4588c0]"><i className="h-2 w-[3px] bg-white" /><i className="h-2 w-[3px] bg-white" /></Box>
        </div>
        <div className="mt-[15px] grid h-[25px] w-[1356px] shrink-0 grid-cols-6 gap-x-[21.400px]">
          <Field label="Job No." w={27} /><Field label="Select Client" w={45} select /><Field label="Client Ref" w={35} /><Field label="Coll Address" w={44} select /><Field label="Del Address" w={44} select /><Field label="Base" w={17} select />
        </div>
        <div className="mt-[7px] grid h-[24px] w-[1356px] shrink-0 grid-cols-6 gap-x-[21.400px] text-[8.500px]">
          <Field label="Status" w={22} select /><Field label="Ops User" w={32} select /><Field label="Booking Date" w={48} />
          <Field label="Booking range" w={52} />
          <div className="col-span-2 flex gap-[22px]"><Box c="h-[22px] w-[93px] bg-[#0a4fc0] text-white">Search</Box><Box c="h-[22px] w-[93px] bg-[#1a90d8] text-white">✖ Clear</Box></div>
        </div>
        <div className="mt-[8px] flex h-[27px] w-[1356px] shrink-0 border-b border-[#ddd] text-[10px] font-bold text-[#222]">
          <Box c="mr-[2px] h-[27px] w-[81px] border border-b-0 border-[#ddd] bg-white"><T w={50}>New Orders</T></Box>
          <Box c="mr-[2px] w-[76px] bg-[#dedede]"><T w={44}>In Process</T></Box>
          <Box c="mr-[2px] w-[79px] bg-[#dedede]"><T w={47}>Completed</T></Box>
          <Box c="w-[74px] bg-[#dedede]"><T w={42}>Cancelled</T></Box>
          <div className="-mt-[2px] ml-auto flex h-[21px] gap-[2px] text-[8.500px] text-white">
            <Box c="mr-[2px] w-[49px] bg-[#249558]">◎ Import</Box>
            <Box c="w-[42px] gap-1 bg-[#249558]"><Upload s={8} /><T w={16} c="font-[Liberation_Serif]">Bulk</T></Box>
            <Box c="w-[48px] gap-[2px] bg-[#249558]"><svg width="8" height="8" viewBox="0 0 10 10" fill="#fff"><path d="M5 6L2 3h2V0h2v3h2zM0 6h10v4H0z" /></svg><T w={24}>Export</T></Box>
          </div>
        </div>
        <div className="ml-px h-[440px] w-[1355px] shrink-0 border-x-2 border-[#e6e6e6] bg-white">
          <div className="ml-auto mr-[13px] mt-[5px] flex h-[25px] w-[45px] items-center justify-between border border-[#ddd] pl-[11px] pr-[3px] text-[8.500px] text-[#777]">20<ChevronDown size={11} strokeWidth={2.2} /></div>
          <div className="-ml-[2px]"><Orders /></div>
        </div>
      </div>
      <div className="h-[17px] shrink-0 border-t border-[#b5c0ca] bg-linear-to-r from-[#dbe7f5] via-[#c9d6e2] to-[#d8e5f3]" />
      <Journey />
      <div className="absolute left-[11px] top-[743px] flex h-6 w-[93px] items-center bg-white text-[10px] text-[#555]">
        <Box c="h-6 w-[26px] rounded-l-[2px] bg-[#4588c0]"><Minus size={10} strokeWidth={4} color="#fff" /></Box>
        <span className="flex-1 pl-[8px] font-['Noto_Sans_CJK_SC',sans-serif]">12</span>
        <Box c="h-6 w-[26px] rounded-r-[2px] bg-[#4588c0]"><Plus size={11} strokeWidth={4} color="#fff" /></Box>
      </div>
      <svg className="absolute left-[1285px] top-[409px]" width="15" height="18" viewBox="0 0 15 18" fill="#fff" stroke="#111" strokeWidth="1.200"><path d="M3.500 1.500c1-1 2 0 2 1l1 4.500c1-1 2-.5 2 .3 1-.8 2-.3 2 .6 1-.5 2 0 2.500 1 1 3 .5 4-.5 6.500l-.5 1.500H7C6 15 3 13 1 10.500c0-1.500 2-1.500 3.500.5z" /><path d="M8 11v3M10 11v3M12 11v3" strokeWidth=".8" /></svg>
    </div>
  );
}

/* ---------- dock ---------- */
const DockApp = ({ c = '', badge, dot, children }: Kids & { c?: string; badge?: string; dot?: boolean }) => (
  <div className="relative flex h-[50px] w-[44px] shrink-0 flex-col items-center pt-[6px]">
    <div className={'flex size-[35px] items-center justify-center overflow-hidden rounded-[8px] ' + c}>{children}</div>
    {dot && <i className="mt-[4px] size-1 rounded-full bg-black" />}
    {badge && <span className="absolute right-0 top-[3px] flex size-4 items-center justify-center rounded-full bg-[#f0523d] text-[9px] leading-none text-white">{badge}</span>}
  </div>
);
const launch = ['bg-[#5fd068]', 'bg-[#f4a93b]', 'bg-[#f0583e]', 'bg-[#c43d3d]', 'bg-[#ddd]', 'bg-[#d96077]', 'bg-[#8a5ad8]', 'bg-[#4aa5e8]', 'bg-[#3fb8a8]'];

function Dock() {
  return (
    <div className="ml-[117px] mt-[3px] flex h-[53px] w-[1145px] rounded-[14px] border border-[#707070] bg-[#545454] font-[Inter,sans-serif]">
      <DockApp dot><svg width="35" height="35"><rect width="35" height="35" fill="#e6eefa" /><path d="M0 0h20c-4 8-4 12-4 18h4c0 6 1 12 2 17H0z" fill="#2a8cf5" /><path d="M9 10v4M26 10v4M7 23c6 6 15 6 21 0" fill="none" stroke="#16304e" strokeWidth="1.500" strokeLinecap="round" /></svg></DockApp>
      <DockApp c="bg-[#c9ccd1]"><span className="grid grid-cols-3 gap-[2px]">{launch.map((b) => <i key={b} className={'size-[7px] rounded-[2px] ' + b} />)}</span></DockApp>
      <DockApp c="bg-white" dot><Chrome s={31} /></DockApp>
      <DockApp c="bg-white"><svg width="30" height="30"><circle cx="15" cy="15" r="14.500" fill="#2d8df0" /><path d="M24 5L13 13l4 4z" fill="#f04040" /><path d="M6 25l11-8-4-4z" fill="#f3f3f3" /></svg></DockApp>
      <DockApp><svg width="35" height="35"><rect y="10" width="35" height="25" rx="5" fill="#222" /><path d="M3 14h29v18H3z" fill="#6fd06a" /><path d="M17.500 23L3 14h14z" fill="#f6d13c" /><path d="M17.500 23L3 14v18z" fill="#f59a3a" /><path d="M17.500 23L3 32h14z" fill="#ee3f7e" /><path d="M17.500 23L17 32h15z" fill="#9b5af0" /><path d="M17.500 23L32 32V20z" fill="#3aa8f0" /><path d="M0 4l33-4 1 10H1z" fill="#ddd" /><path d="M5 3l5 7M13 2l5 8M21 1l5 9M29 0l4 6" stroke="#222" strokeWidth="3.500" /></svg></DockApp>
      <DockApp c="bg-white" dot><svg width="31" height="31"><rect width="31" height="31" rx="6" fill="#a9c8ef" /><path d="M0 16h31v7H0z" fill="#2e5683" /><path d="M0 22h31v9H0z" fill="#d9dfe6" /><path d="M18 16h10l1 15H16z" fill="#333" /><path d="M19 25h7l1 5h-9z" fill="#bbb" /></svg></DockApp>
      <DockApp c="bg-linear-to-b from-[#5be066] to-[#20b52e]" badge="37" dot><svg width="26" height="26"><ellipse cx="13" cy="11.500" rx="12" ry="9.500" fill="#eefbee" /><path d="M4 17l-1 7 8-4z" fill="#eefbee" /></svg></DockApp>
      <DockApp c="bg-[#e8ece4]"><svg width="35" height="35"><path d="M0 0h14v35H0z" fill="#6ac873" /><path d="M14 0h8v35h-8z" fill="#fff" /><path d="M22 0h13v18L22 12z" fill="#5ac65f" /><path d="M22 12l13 8v6L14 14z" fill="#f6ce46" /><path d="M0 22l12 13H0z" fill="#e97fb0" /><path d="M16 0h5v14h-5z" fill="#4285f4" /><circle cx="14" cy="21" r="9.500" fill="#3f8af5" stroke="#fff" /><path d="M14 14l5 12-5-3-5 3z" fill="#fff" /></svg></DockApp>
      <DockApp c="bg-white"><svg width="31" height="31" viewBox="0 0 31 31">{['#f59b23', '#f4d03a', '#a6cf45', '#3fb56c', '#3d9be0', '#6a6fd0', '#b25bb8', '#ef5a55'].map((f, i) => <ellipse key={f} cx="15.500" cy="8" rx="4.500" ry="7" fill={f} opacity=".85" transform={`rotate(${i * 45} 15.500 15.500)`} />)}</svg></DockApp>
      <DockApp c="flex-col bg-white"><span className="flex h-[11px] w-full items-center justify-center bg-[#ef4b3f] text-[7px] font-semibold leading-none text-white">AUG</span><span className="h-6 text-[20px] leading-6 text-[#333]">2</span></DockApp>
      <DockApp c="bg-white" badge="12"><svg width="31" height="31"><circle cx="6" cy="8" r="2.500" fill="#2f7df6" /><circle cx="6" cy="16" r="2.500" fill="#f0513c" /><circle cx="6" cy="24" r="2.500" fill="#f59b23" /><path d="M12 8h16M12 16h16M12 24h16" stroke="#ccc" /></svg></DockApp>
      <DockApp c="bg-[#8d9196]" badge="1"><svg width="31" height="31" fill="none" stroke="#222"><circle cx="15.500" cy="15.500" r="13" strokeWidth="3" strokeDasharray="1.500 .7" /><circle cx="15.500" cy="15.500" r="9.500" strokeWidth="2.500" /><path d="M15.500 15.500L6 15M15.500 15.500l6-8M15.500 15.500l6 8" strokeWidth="2.500" /></svg></DockApp>
      <i className="ml-[10px] mr-[9px] mt-[5px] h-10 w-px bg-[#383838]" />
      <DockApp c="bg-white" dot><Teams s={28} /></DockApp>
      <DockApp c="border-t-[9px] border-[#fbd02d] bg-[#efebe6]" dot><i className="h-px w-full bg-[#ccc]" /></DockApp>
      <DockApp c="bg-[#20123a]" dot><svg className="absolute" width="1" height="1"><linearGradient id="ff" x1="0" y1="0" x2="0" y2="1"><stop offset="0" stopColor="#ffd43a" /><stop offset=".5" stopColor="#ff8a16" /><stop offset="1" stopColor="#f0325f" /></linearGradient><linearGradient id="edge" x1="0" y1="0" x2="1" y2="0"><stop offset="0" stopColor="#0f5fb5" /><stop offset=".5" stopColor="#27a9dc" /><stop offset="1" stopColor="#58d05a" /></linearGradient></svg><span className="flex items-center justify-center rounded-full bg-[radial-gradient(#7a3fe0_35%,transparent_50%)]"><FaFirefoxBrowser size={32} fill="url(#ff)" /></span></DockApp>
      <DockApp c="bg-white" dot><Office ch="O" d="#1458a8" l="#35a8e8" m="#1f7fd6" /></DockApp>
      <DockApp c="bg-white" dot><Office ch="W" d="#1a4799" l="#41a5ee" m="#2b7cd3" /></DockApp>
      <DockApp c="bg-white" dot><Office ch="X" d="#135c36" l="#33c481" m="#21a366" /></DockApp>
      <DockApp c="bg-linear-to-b from-[#62d85e] to-[#24b530]" dot><FaWhatsapp size={30} color="#fff" /></DockApp>
      <DockApp c="bg-linear-to-b from-[#3a6ef5] to-[#31a8f8]" badge="3" dot><svg width="26" height="19"><rect width="26" height="19" rx="2" fill="#e8ecf0" /><path d="M1 1l12 10L25 1M1 18l9-9M25 18l-9-9" fill="none" stroke="#999" /></svg></DockApp>
      <DockApp c="bg-white" dot><svg width="28" height="28"><circle cx="16" cy="14" r="11" fill="#ed6c47" /><path d="M16 14h11a11 11 0 0 1-22 0z" fill="#c43e1c" /><rect x="2" y="8" width="12" height="12" rx="1.500" fill="#b7391a" /><text x="8" y="17.500" fontSize="9.500" fontWeight="700" fill="#fff" textAnchor="middle">P</text></svg></DockApp>
      <DockApp c="bg-linear-to-b from-[#fb5c6c] to-[#f93850]" dot><FaMusic size={23} color="#fff" /></DockApp>
      <i className="ml-[10px] mr-[9px] mt-[5px] h-10 w-px bg-[#383838]" />
      <div className="relative w-[44px] shrink-0 pl-[3px] pt-3"><div className="flex h-[28px] w-[39px] justify-center bg-black pt-2"><i className="size-2 rounded-full bg-[#fdeec9]" /><i className="mt-1 h-2 w-3 bg-[#134050]" /></div><span className="absolute bottom-[7px] right-0 flex size-[13px] items-center justify-center rounded-sm bg-white"><Teams s={11} /></span></div>
      <div className="relative w-[44px] shrink-0 pl-[3px] pt-2"><div className="flex h-[36px] w-[39px] items-center justify-center bg-black"><i className="flex size-4 items-center justify-center rounded-full bg-[#fdeec9] text-[5px] text-[#835c00] not-italic">S</i></div><i className="absolute right-[7px] top-2 size-[5px] bg-[#41b8e0]" /><span className="absolute bottom-[7px] right-0 flex size-[13px] items-center justify-center rounded-sm bg-white"><Teams s={11} /></span></div>
      <div className="w-[44px] shrink-0 pl-[7px] pt-[3px]"><svg width="31" height="40" viewBox="0 0 31 40"><path d="M1 5h29l-4 32q-10 5-21 0z" fill="#cfd1d2" /><path d="M6 8l3 29M13 8l1 30M25 8l-3 29" stroke="#b2b5b6" /><ellipse cx="15.500" cy="5" rx="14.500" ry="4" fill="#eee" /><path d="M4 5l4-3 3 4 4-5 4 4 4-3 3 3-5 2H9z" fill="#555" /></svg></div>
    </div>
  );
}

/* ---------- stage ---------- */
function Stage() {
  return (
    <div className="flex h-[871px] shrink-0 bg-[#1f1f1f]">
      <div className="flex w-[149px] items-end pb-[13px] pl-[13px]">
        <Box c="h-6 w-[69px] rounded bg-[#111] text-white"><T w={57} c="text-[11.500px] font-semibold">Partha Dey</T></Box>
        <Box c="ml-2 h-6 w-[59px] justify-between rounded-l bg-[#111] pl-[9px] pr-[2px] text-[#ccc]"><Minus size={17} strokeWidth={1.6} color="#999" /><span className="ml-auto"><Plus size={17} strokeWidth={1.6} /></span></Box>
      </div>
      <div className="mt-[5px] flex h-[861px] w-[1378px] shrink-0 flex-col bg-black">
        <MacMenu />
        <MacWindow />
        <Dock />
      </div>
      <div className="relative flex w-[393px] flex-col items-center pl-[142px]">
        <div className="mt-[256px] flex size-[188px] shrink-0 items-center justify-center rounded-full border-[3px] border-[#7f85f5] bg-[#1d1c28] shadow-[0_0_40px_8px_#2a2a3c]">
          <div className="flex size-[176px] items-center justify-center rounded-full bg-[#949494]">
            <svg width="78" height="90" viewBox="0 0 78 90" fill="none" stroke="#fff" strokeWidth="5.500"><circle cx="39" cy="23" r="19" /><path d="M9 53h60a6 6 0 0 1 6 6c0 18-17 27-36 27S3 77 3 59a6 6 0 0 1 6-6z" /></svg>
          </div>
        </div>
        <T w={57} c="mt-[5px] text-[11.500px] text-white">Partha Dey</T>
        <div className="mt-auto mb-[5px] flex h-[133px] w-[241px] items-center justify-center bg-[#323232]">
          <span className="flex size-[56px] items-center justify-center rounded-full bg-[#fdeec9] text-[21px] font-semibold text-[#835c00]">S</span>
        </div>
        <div className="absolute right-0 top-[271px] flex h-[75px] w-[69.500px] items-center rounded-l-full border-y border-[#ff9a3c] bg-linear-to-b from-[#f47b1c] to-[#b9550f] pl-[5px]">
          <span className="flex size-[63px] shrink-0 items-center justify-center rounded-full border-4 border-[#c6c6c6] bg-[#ededed]">
            <span className="flex size-[38px] items-center justify-center rounded-full border border-[#777] bg-[#8c8c8c]">
              <svg width="28" height="21" fill="#ececec"><circle cx="6" cy="5" r="4.500" /><circle cx="16" cy="5" r="5" /><rect x="3" y="9" width="16" height="11" rx="2" /><path d="M20 14l7-5v10z" /></svg>
            </span>
          </span>
        </div>
      </div>
    </div>
  );
}

/* ---------- taskbar ---------- */
const Task = ({ children, run, active }: Kids & { run?: boolean; active?: boolean }) => (
  <div className={'flex h-10 w-[48.900px] shrink-0 items-center justify-center ' + (active ? 'bg-[#707070] ' : '')}>
    <span className={'flex h-10 items-center justify-center border-[#76b9ed] pt-[2px] ' + (active ? 'w-[48px] border-b-2' : run ? 'w-10 border-b-2' : 'w-10 pb-[2px]')}>{children}</span>
  </div>
);

function Taskbar() {
  return (
    <div className="flex h-10 shrink-0 bg-linear-to-r from-[#464646] from-87% to-[#222] to-92%">
      <Box c="w-[48px] bg-[#333]"><FaWindows size={17} color="#fff" /></Box>
      <div className="mr-px flex w-[288px] shrink-0 items-center overflow-hidden border border-[#d8d8d8] bg-[#f2f2f2] pl-[10px] text-[#222]">
        <svg width="18" height="18" fill="none" stroke="#222" strokeWidth="1.500"><circle cx="11" cy="7" r="5.500" /><path d="M7 11l-6 6.500" /></svg>
        <T w={128} c="ml-[10px] text-[14px] text-[#333]">Type here to search</T>
        <svg className="ml-auto" width="72" height="40" viewBox="0 0 72 40">
          <ellipse cx="40" cy="20" rx="34" ry="18" fill="#ffe9b0" opacity=".8" />
          <path d="M1 20l10-2-6-5 12 3-3-9 9 8 3-5 8 8 6 2-2 4 2 4-8 4-4-3-8 6 2-7-9 3 4-5z" fill="#f36c21" />
          <path d="M12 20l10-4 8 4-8 5z" fill="#ffb52e" />
          <path d="M72-6l-14 6-3 3-4 1 1 5-5 3 2 4-4 4 4 4-3 5 5 3-1 5 5 1 3 5h14z" fill="#ffa114" />
          <circle cx="76" cy="20" r="24" fill="#fb7a0c" />
        </svg>
      </div>
      <Task><svg width="18" height="18" fill="none" stroke="#fff" strokeWidth="1.300"><path d="M1 0v3.500h11V0M1 18v-3.500h11V18M1 6h11v6H1zM16 0v18" /><path d="M14.500 5h3v3h-3z" fill="#fff" /></svg></Task>
      <span className="w-[2px]" />
      <Task><svg width="24" height="24"><path d="M1 23c3-9 8-18 22-22-1 10-8 17-18 17z" fill="#b583d6" /><path d="M1 23C6 14 12 8 23 1" stroke="#e8d5f5" fill="none" /></svg></Task>
      <Task active><Chrome s={24} /></Task>
      <Task><FaEdge size={23} fill="url(#edge)" /></Task>
      <Task><svg width="22" height="24"><path d="M7 6V2.500A1.500 1.500 0 0 1 8.500 1h5A1.500 1.500 0 0 1 15 2.500V6" fill="none" stroke="#35a4e8" strokeWidth="2" /><rect y="5" width="22" height="18" rx="2" fill="#fff" /><path d="M6 9h4.500v4.500H6z" fill="#f25022" /><path d="M11.500 9H16v4.500h-4.500z" fill="#7fba00" /><path d="M6 14.500h4.500V19H6z" fill="#00a4ef" /><path d="M11.500 14.500H16V19h-4.500z" fill="#ffb900" /></svg></Task>
      <Task run><svg width="24" height="24"><path d="M12 1c8-1 12 5 11 11-1 7-6 11-12 11S1 18 2 12C2 5 6 2 12 1z" fill="#1b6ac9" /><path d="M5 10C10 4 18 4 22 12c1-6-3-11-10-11S2 5 2 11z" fill="#0f4a9c" /><path d="M3 11l9-3 7 5-5 8-9-3z" fill="#eef3f8" /><path d="M3 11l8 4 8-2" stroke="#8aa" fill="none" /></svg></Task>
      <Task><svg width="24" height="24"><circle cx="8" cy="8" r="7" fill="#0d8fd6" /><circle cx="16" cy="16" r="7" fill="#0d8fd6" /><circle cx="12" cy="12" r="9.500" fill="#1fb2f1" /><text x="12" y="17" fontSize="14" fontWeight="700" fill="#fff" textAnchor="middle">S</text></svg></Task>
      <Task run><span className="rounded-full bg-[radial-gradient(#7a3fe0_30%,transparent_50%)]"><FaFirefoxBrowser size={24} fill="url(#ff)" /></span></Task>
      <Task run><svg width="22" height="20"><path d="M0 1h8l2 2h12v16H0z" fill="#f8c441" /><path d="M0 6h22v13H0z" fill="#ffdb75" /><path d="M4 20v-8h14v8h-4v-4H8v4z" fill="#3d97dc" /></svg></Task>
      <Task><span className="flex size-6 items-center justify-center rounded-full bg-linear-to-br from-[#8a4cf0] via-[#e8318c] to-[#fb3b3b]"><svg width="16" height="12" fill="none" stroke="#fff" strokeWidth="2"><path d="M1 1l3 10 4-9 2 9 5-10H9" /></svg></span></Task>
      <Task run><svg width="22" height="24"><path d="M7 3h13l-2 18H2z" fill="#8fd0e0" /><path d="M7 3h11l-5 18H2z" fill="#b5dfe9" /><path d="M7 2h13" stroke="#ccc" strokeWidth="2" strokeDasharray="1.500 1" /><path d="M20 4l-1 18-15 0" stroke="#c08a4a" fill="none" /></svg></Task>
      <Task run><svg width="24" height="24"><path d="M17 0l6 3v18l-6 3-5-7V7z" fill="#b07cf0" /><path d="M0 6l4-1 13 13v6L0 9z" fill="#8a52d6" /><path d="M0 18l4 1L17 6V0L0 14z" fill="#6a3cb5" /></svg></Task>
      <Task run><svg width="24" height="24"><rect width="24" height="24" fill="#b30000" /><path d="M5 20L8 5h9M6.500 11.500H13M12 12h7l-7 8h7" fill="none" stroke="#fff" strokeWidth="2.600" /></svg></Task>
      <div className="ml-auto flex items-center text-white">
        <svg width="24" height="17" fill="none" stroke="#fff" strokeWidth="1.500"><path d="M1 1h18v15H1zM19 4h4v12h-5M4 4h12M12 8h4M12 11h4M12 13.500h4" /><rect x="4.500" y="7.500" width="5" height="5" /></svg>
        <T w={29} c="ml-2 text-[14px]">33°C</T><T w={86} c="ml-[9px] text-[14px]">Mostly cloudy</T>
        <Box c="ml-[22px] w-[16px]"><svg width="13" height="8" fill="none" stroke="#fff" strokeWidth="1.300"><path d="M.5 7.500l6-6 6 6" /></svg></Box>
        <Box c="ml-2 w-[18px]"><svg width="13" height="17" fill="none" stroke="#fff"><rect x="1" y="4" width="8" height="9" rx="2" /><path d="M9 7l3-1.500v6L9 10M2 1.500c2-1 4-1 6 0M2 15.500c2 1 4 1 6 0" /></svg></Box>
        <Box c="ml-[6px] w-[16px]"><Mic size={17} fill="#fff" /></Box>
        <Box c="ml-[8px] w-[18px]"><Globe size={17} strokeWidth={1.6} /></Box>
        <Box c="ml-[6px] w-[18px]"><Volume2 size={18} strokeWidth={1.5} /></Box>
        <T w={22} c="ml-[9px] text-[12px]">ENG</T>
        <div className="ml-[14px] flex w-[58px] flex-col items-center gap-[6px] pb-[2px]"><T w={26} c="text-[11.500px]">15:52</T><T w={58} c="text-[11.500px]">02-08-2023</T></div>
        <div className="relative ml-[18px] h-[28px] w-[36px]"><svg width="18" height="18"><path d="M1 2h16v12H5l-4 3z" fill="#fff" /><path d="M3 5h12M3 8h12M3 11h8" stroke="#222" /></svg><span className="absolute left-[5px] top-[12px] flex h-[16px] w-[20px] items-center justify-center rounded-full border border-[#777] bg-[#222] text-[10.500px] font-bold leading-none">22</span></div>
        <i className="mr-1 h-10 w-px bg-[#777]" />
      </div>
    </div>
  );
}

export default function App() {
  return (
    <div className="flex h-[1080px] w-[1920px] flex-col overflow-hidden bg-[#1f1f1f] font-['Open_Sans',sans-serif]">
      <OuterChrome />
      <MeetingBar />
      <Stage />
      <Taskbar />
    </div>
  );
}
